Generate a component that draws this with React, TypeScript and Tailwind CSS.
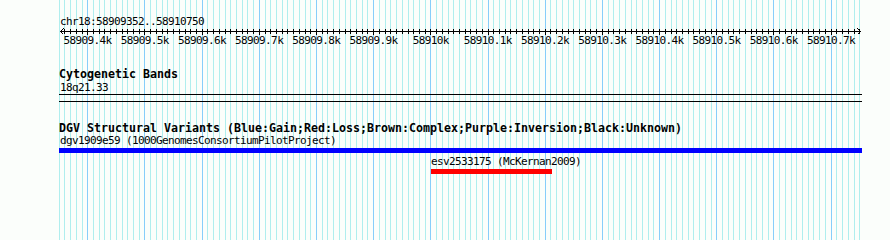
import React from "react";

// 10bp per minor step, anchored on the 58909400 major line
const X0 = 87.3;
const STEP = 5.718;
const px = (i: number) => Math.round(X0 + i * STEP);

const gridLines = Array.from({ length: 141 }, (_, k) => k - 5);
const ticks = Array.from({ length: 140 }, (_, k) => k - 4);
const labels = [
  "58909.4k",
  "58909.5k",
  "58909.6k",
  "58909.7k",
  "58909.8k",
  "58909.9k",
  "58910k",
  "58910.1k",
  "58910.2k",
  "58910.3k",
  "58910.4k",
  "58910.5k",
  "58910.6k",
  "58910.7k",
];

function Grid() {
  return (
    <svg className="absolute inset-0" width={890} height={240} shapeRendering="crispEdges">
      {gridLines.map((i) => {
        const x = Math.max(59, px(i));
        const major = i % 10 === 0;
        return (
          <rect key={i} x={x} y={0} width={1} height={240} fill={major ? "#87cefa" : "#afeeee"} />
        );
      })}
    </svg>
  );
}

function Ruler() {
  return (
    <svg width={890} height={20} shapeRendering="crispEdges" className="block">
      <rect x={60} y={3} width={801} height={1} fill="#000" />
      <path d="M60.5 3.5 L63.5 0.5 M60.5 3.5 L63.5 6.5 M860.5 3.5 L857.5 0.5 M860.5 3.5 L857.5 6.5" stroke="#000" fill="none" />
      {ticks.map((i) => (
        <rect key={i} x={px(i)} y={1} width={1} height={i % 10 === 0 ? 6 : 5} fill="#000" />
      ))}
      {labels.map((l, n) => (
        <text
          key={l}
          x={X0 + n * 57.18 + 0.3}
          y={16}
          textAnchor="middle"
          fontSize={11}
          letterSpacing={-0.62}
          fontFamily="DejaVu Sans Mono, monospace"
          fill="#000"
        >
          {l}
        </text>
      ))}
    </svg>
  );
}

export default function App() {
  return (
    <div className="relative w-[890px] h-[240px] overflow-hidden bg-[#fbfefb] text-black font-['DejaVu_Sans_Mono',monospace]">
      <Grid />
      <div className="relative">
        <div className="pt-[15px] pl-[60px] text-[11px] leading-[13px] tracking-[-0.62px]">chr18:58909352..58910750</div>
        <Ruler />

        <div className="mt-[20px] pl-[59px] text-[11.63px] leading-[13px] font-bold">Cytogenetic Bands</div>
        <div className="pl-[60px] text-[11px] leading-[13px] tracking-[-0.62px]">18q21.33</div>
        <div className="ml-[59px] w-[803px] h-[7px] border-t border-black" />
        <div className="ml-[59px] w-[803px] h-px bg-black" />

        <div className="mt-[20px] pl-[59px] text-[11.63px] leading-[12px] font-bold whitespace-pre">
          DGV Structural Variants (Blue:Gain;Red:Loss;Brown:Complex;Purple:Inversion;Black:Unknown)
        </div>
        <div className="pl-[60px] text-[11px] leading-[13px] tracking-[-0.62px] whitespace-pre">
          dgv1909e59 (1000GenomesConsortiumPilotProject)
        </div>
        <div className="mt-[1px] ml-[59px] w-[803px] h-[5px] bg-[#0000ff]" />
        <div className="mt-[2px] pl-[431px] text-[11px] leading-[13px] tracking-[-0.62px] whitespace-pre">
          esv2533175 (McKernan2009)
        </div>
        <div className="mt-[1px] ml-[431px] w-[121px] h-[5px] bg-[#ff0000]" />
      </div>
    </div>
  );
}
